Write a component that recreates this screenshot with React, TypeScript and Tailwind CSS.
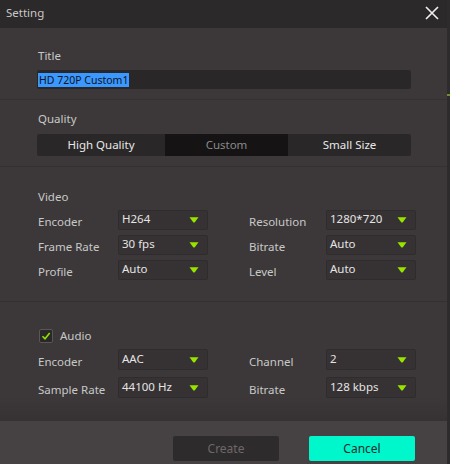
import React from "react";

const font = { fontFamily: '"Noto Sans", "Open Sans", sans-serif' };

function Tri() {
  return (
    <svg width="10" height="6" viewBox="0 0 10 6" className="shrink-0">
      <path d="M0.5 0.3 H9.5 L5.8 5.2 Q5 6 4.2 5.2 Z" fill="#96e400" />
    </svg>
  );
}

function Select({ value, h = "h-[20px]" }: { value: string; h?: string }) {
  return (
    <div
      className={`w-[90px] ${h} flex items-center justify-between pl-[3px] pr-[8px] rounded-[2px] bg-[#363233] border border-[#2f2c2d] text-[11.5px] text-[#e4e4e4]`}
    >
      <span className="leading-none -mt-[2px]">{value}</span>
      <Tri />
    </div>
  );
}

function Row({
  l1,
  v1,
  l2,
  v2,
  h,
  pt = "pt-[4px]",
}: {
  l1: string;
  v1: string;
  l2: string;
  v2: string;
  h?: string;
  pt?: string;
}) {
  return (
    <div className="flex items-start">
      <div className={`w-[80px] ${pt} text-[11.5px] leading-[16px] text-[#c8c8c8]`}>{l1}</div>
      <Select value={v1} h={h} />
      <div className="w-[41px]" />
      <div className={`w-[77px] ${pt} text-[11.5px] leading-[16px] text-[#c8c8c8]`}>{l2}</div>
      <Select value={v2} h={h} />
    </div>
  );
}

export default function App() {
  return (
    <div style={font} className="w-[450px] h-[464px] flex bg-[#3c3839] overflow-hidden">
      <div className="w-[447px] flex flex-col">
        {/* title bar */}
        <div className="h-[28px] shrink-0 bg-[#2c292a] flex items-center justify-between pl-[6px] pr-[8px]">
          <span className="text-[11.5px] text-[#c8c8c8] leading-none -mt-[2px]">Setting</span>
          <svg width="14" height="14" viewBox="0 0 14 14" className="-mt-[2px]">
            <path d="M1 1 L13 13 M13 1 L1 13" stroke="#f0f0f0" strokeWidth="1.6" />
          </svg>
        </div>

        {/* title section */}
        <div className="h-[72px] shrink-0 border-b border-[#353132] pl-[37px] pr-[36px] pt-[20px]">
          <div className="text-[11.5px] leading-[16px] text-[#c8c8c8] pl-[1px]">Title</div>
          <div className="mt-[6px] h-[19px] bg-[#2a2728] rounded-[2px] flex items-center pl-[1px]">
            <span className="bg-[#3a98ff] text-[#0c1424] text-[10.5px] leading-[14px] px-[1px]">
              HD 720P Custom1
            </span>
          </div>
        </div>

        {/* quality section */}
        <div className="h-[67px] shrink-0 border-b border-[#333031] pl-[37px] pr-[36px] pt-[11px]">
          <div className="text-[11.5px] leading-[16px] text-[#c8c8c8] pl-[1px]">Quality</div>
          <div className="mt-[7px] h-[22px] flex rounded-[2px] overflow-hidden bg-[#2a2728] text-[11.5px]">
            <div className="w-[128px] flex items-center justify-center text-[#e8e8e8]">High Quality</div>
            <div className="w-[123px] flex items-center justify-center bg-[#151314] text-[#8a8a8a]">Custom</div>
            <div className="flex-1 flex items-center justify-center text-[#e8e8e8]">Small Size</div>
          </div>
        </div>

        {/* video section */}
        <div className="h-[135px] shrink-0 border-b border-[#333031] pl-[37px] pt-[22px]">
          <div className="text-[11.5px] leading-[16px] text-[#c8c8c8] pl-[1px]">Video</div>
          <div className="mt-[5px] flex flex-col gap-[5px] pl-[1px]">
            <Row l1="Encoder" v1="H264" l2="Resolution" v2="1280*720" />
            <Row l1="Frame Rate" v1="30 fps" l2="Bitrate" v2="Auto" />
            <Row l1="Profile" v1="Auto" l2="Level" v2="Auto" />
          </div>
        </div>

        {/* audio section */}
        <div className="flex-1 pl-[37px] pt-[27px] bg-gradient-to-b from-[#3c3839] from-[80%] to-[#363233]">
          <div className="flex items-center h-[14px] pl-[2px]">
            <div className="w-[14px] h-[14px] rounded-[2px] border border-[#5a5657] bg-[#2a2728] flex items-center justify-center">
              <svg width="10" height="10" viewBox="0 0 10 10">
                <path d="M1.5 5.2 L4 7.8 L8.7 2" stroke="#8fe000" strokeWidth="1.6" fill="none" />
              </svg>
            </div>
            <span className="ml-[7px] text-[11.5px] leading-none text-[#c8c8c8] -mt-[1px]">Audio</span>
          </div>
          <div className="mt-[6px] flex flex-col gap-[7px] pl-[1px]">
            <Row l1="Encoder" v1="AAC" l2="Channel" v2="2" h="h-[21px]" pt="pt-[5px]" />
            <Row l1="Sample Rate" v1="44100 Hz" l2="Bitrate" v2="128 kbps" h="h-[21px]" pt="pt-[5px]" />
          </div>
        </div>

        {/* footer */}
        <div className="h-[43px] shrink-0 bg-[#464243] flex justify-end items-start pt-[15px] pr-[32px] gap-[30px]">
          <button className="w-[106px] h-[25px] rounded-[2px] bg-[#2e2b2c] text-[12px] text-[#6c6869]">
            Create
          </button>
          <button className="w-[106px] h-[25px] rounded-[2px] bg-[#00f7cb] text-[12px] text-[#1e2a28]">
            Cancel
          </button>
        </div>
      </div>
      {/* scrollbar strip */}
      <div className="w-[3px] flex flex-col bg-[#2e2b2c]">
        <div className="h-[94px]" />
        <div className="h-[2px] bg-[#6f8f2a]" />
      </div>
    </div>
  );
}
